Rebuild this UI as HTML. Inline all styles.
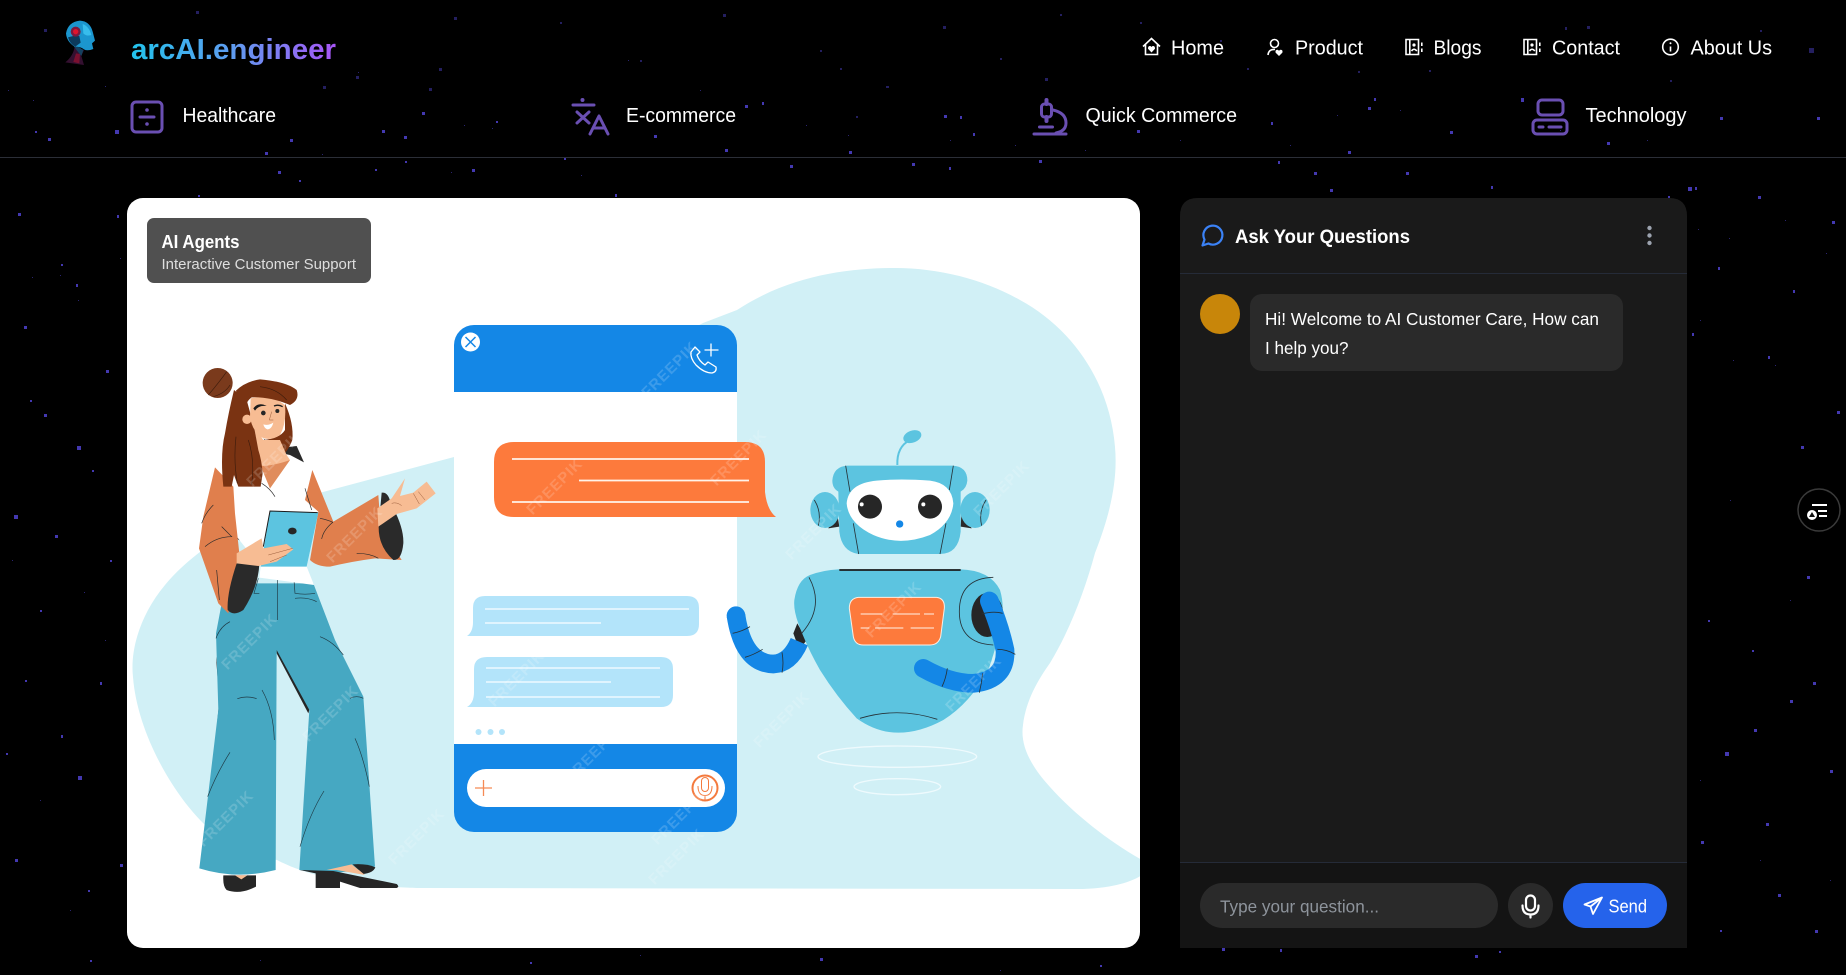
<!DOCTYPE html>
<html lang="en"><head><meta charset="utf-8"><title>arcAI.engineer</title>
<style>
html,body{margin:0;padding:0;background:#000;width:1846px;height:975px;overflow:hidden}
svg{display:block;position:absolute;left:0;top:0}
text{font-family:"Liberation Sans",Arial,sans-serif}
.n{font-size:20px;fill:#fff}
.wm{font-size:15px;font-weight:bold;fill:#fff;opacity:.17;letter-spacing:1px;text-anchor:middle}
</style></head><body>
<svg width="1846" height="975" viewBox="0 0 1846 975" xmlns="http://www.w3.org/2000/svg">
<defs>
<linearGradient id="tg" gradientUnits="userSpaceOnUse" x1="131" y1="0" x2="336" y2="0"><stop offset="0" stop-color="#22c3ec"/><stop offset=".5" stop-color="#5f9bf0"/><stop offset="1" stop-color="#a855f7"/></linearGradient>
<clipPath id="card"><rect x="127" y="198" width="1013" height="750" rx="16"/></clipPath>
</defs>
<rect width="1846" height="975" fill="#000"/>
<!-- stars -->
<path fill="#4338b0" d="M115 130h4v4h-4zM35 131h2v2h-2zM48 138h3v3h-3zM290 139h3v3h-3zM382 130h3v3h-3zM404 136h3v3h-3zM422 112h3v3h-3zM496 121h2v2h-2zM265 152h3v3h-3zM278 171h3v3h-3zM375 169h2v2h-2zM472 169h3v3h-3zM405 161h2v2h-2zM299 180h2v2h-2zM198 195h2v2h-2zM117 215h2v3h-2zM18 213h3v3h-3zM76 284h2v3h-2zM61 264h2v2h-2zM564 158h2v2h-2zM615 194h2v3h-2zM745 105h3v3h-3zM762 102h2v3h-2zM654 135h3v3h-3zM725 149h3v3h-3zM849 151h3v3h-3zM790 165h3v3h-3zM912 163h3v3h-3zM949 167h2v3h-2zM1039 160h3v3h-3zM944 115h3v3h-3zM960 116h2v3h-2zM973 133h2v3h-2zM1137 130h3v3h-3zM1521 98h3v4h-3zM1368 107h3v3h-3zM1374 98h2v3h-2zM1271 122h2v3h-2zM1450 131h3v3h-3zM1348 151h3v3h-3zM1278 161h2v3h-2zM1314 172h3v3h-3zM1406 172h3v3h-3zM1330 189h3v3h-3zM1491 186h2v3h-2zM1688 187h4v4h-4zM1758 196h3v3h-3zM1668 196h2v3h-2zM1720 117h3v3h-3zM1817 117h3v3h-3zM1607 142h3v3h-3zM1832 221h3v3h-3zM1718 267h2v3h-2zM1793 290h2v3h-2zM1692 333h2v3h-2zM1768 356h2v3h-2zM24 326h3v3h-3zM106 370h3v3h-3zM44 414h3v3h-3zM77 446h4v4h-4zM14 515h4v4h-4zM55 535h3v3h-3zM78 776h4v4h-4zM15 859h3v3h-3zM120 864h3v3h-3zM61 735h2v3h-2zM100 682h2v3h-2zM6 753h2v2h-2zM1754 729h3v3h-3zM1766 823h3v3h-3zM1725 752h4v4h-4zM1813 682h3v3h-3zM1695 187h2v3h-2zM1801 446h3v3h-3zM1701 841h3v3h-3zM1778 894h3v3h-3zM1837 411h3v3h-3zM1807 576h3v3h-3zM1222 948h3v3h-3zM1280 949h2v3h-2zM1475 955h3v3h-3zM1499 951h2v2h-2zM1708 620h2v2h-2zM1752 650h2v2h-2zM1790 700h3v3h-3zM1830 770h3v3h-3zM1720 930h2v2h-2zM1815 930h3v3h-3zM90 960h2v2h-2zM530 962h2v2h-2zM820 958h3v3h-3zM1100 965h2v2h-2zM40 610h2v2h-2zM110 560h2v2h-2zM25 680h2v2h-2zM88 890h2v2h-2zM30 400h2v2h-2zM92 470h2v2h-2z"/>
<path fill="#241f60" d="M196 11h3v3h-3zM454 17h3v3h-3zM356 76h3v3h-3zM439 68h3v3h-3zM323 86h3v3h-3zM429 88h3v3h-3zM44 29h3v3h-3zM723 14h3v3h-3zM943 26h3v3h-3zM840 68h2v2h-2zM1045 78h3v3h-3zM886 86h3v2h-3zM856 116h2v2h-2zM1809 48h5v5h-5zM1587 26h3v3h-3zM1358 71h2v2h-2zM1429 70h2v2h-2zM1247 68h2v2h-2zM1565 27h2v3h-2zM1000 58h2v2h-2zM820 50h2v2h-2zM640 60h2v2h-2zM560 22h2v2h-2zM1760 30h2v2h-2zM1670 80h2v2h-2zM1060 14h2v2h-2zM1140 22h2v2h-2zM1220 40h2v2h-2z"/>
<path fill="#2a2470" d="M8 90h1v1H8zM33 100h1v1h-1zM105 86h1v1h-1zM358 72h1v1h-1zM464 125h1v1h-1zM492 128h1v1h-1zM451 172h1v1h-1zM581 175h1v1h-1zM322 154h1v1h-1zM628 60h1v1h-1zM700 90h1v1h-1zM806 125h1v1h-1zM848 135h1v1h-1zM950 140h1v1h-1zM1015 145h1v1h-1zM1100 120h1v1h-1zM1085 150h1v1h-1zM1180 140h1v1h-1zM1290 145h1v1h-1zM1337 115h1v1h-1zM1400 110h1v1h-1zM1560 130h1v1h-1zM1647 140h1v1h-1zM1698 229h1v1h-1zM1729 238h1v1h-1zM1785 220h1v1h-1zM1826 253h1v1h-1zM1775 365h1v1h-1zM1733 360h1v1h-1zM1680 375h1v1h-1zM1700 320h1v1h-1zM60 275h1v1H60zM32 277h1v1H32zM120 258h1v1h-1zM78 300h1v1H78zM12 560h1v1H12zM84 592h1v1H84zM105 640h1v1h-1zM40 800h1v1H40zM70 910h1v1H70zM1730 500h1v1h-1zM1790 600h1v1h-1zM1700 780h1v1h-1zM1760 860h1v1h-1zM1830 880h1v1h-1zM260 960h1v1h-1zM640 955h1v1h-1zM1000 970h1v1h-1z"/>

<!-- logo -->
<g transform="translate(40,0) scale(.3333)">
<path fill="#341030" d="M104 140L132 150 124 168 132 195 76 187Q100 168 104 140Z"/>
<path fill="#7a1030" d="M108 160L120 162 118 190 100 186Z"/>
<path fill="#14405f" d="M92 125L130 150 124 168 108 148Z"/>
<path fill="#1b96cf" d="M120 62Q150 64 158 95L165 122 156 130 160 147Q142 154 132 148 122 140 104 140 80 125 78 100 84 66 120 62Z"/>
<path fill="#0c3a5c" d="M84 112Q90 132 106 140L122 128 118 108 100 108Z"/>
<path fill="#37bdec" d="M128 72Q148 80 154 105 140 110 130 100Z"/>
<circle cx="107" cy="95" r="15" fill="#7d1a3e"/><circle cx="107" cy="95" r="8" fill="#e0142e"/>
</g>
<text x="131" y="59" font-size="28.500" font-weight="bold" fill="url(#tg)" textLength="205" lengthAdjust="spacingAndGlyphs">arcAI.engineer</text>

<!-- top nav -->
<g fill="none" stroke="#fff" stroke-width="1.600">
<path d="M1143 46.500L1151.500 38.500 1160 46.500M1145.500 44.500V54.500H1157.500V44.500"/>
<path fill="#fff" stroke="none" d="M1151.500 52.500L1148 48.800Q1147.800 46 1150 46 1151 46 1151.500 47 1152 46 1153 46 1155.200 46 1155 48.800Z"/>
<circle cx="1274.500" cy="43.500" r="4"/><path d="M1268 55Q1268.500 49 1275 49.500"/>
<path fill="#fff" stroke="none" d="M1279 56L1275.600 52.600Q1275 50 1277.200 49.800 1278.400 49.700 1279 51 1279.600 49.700 1280.800 49.800 1283 50 1282.400 52.600Z"/>
<path d="M1406 39.500H1418.500V54.500H1406ZM1409.800 39.500V54.500M1421.800 42.500V46M1421.800 48.500V52"/>
<circle cx="1414" cy="45" r="1.600" fill="#fff" stroke="none"/><path d="M1411.500 51Q1414 47.500 1416.800 51"/>
<path d="M1524 39.500H1536.500V54.500H1524ZM1527.800 39.500V54.500M1539.800 42.500V46M1539.800 48.500V52"/>
<circle cx="1532" cy="45" r="1.600" fill="#fff" stroke="none"/><path d="M1529.500 51Q1532 47.500 1534.800 51"/>
<circle cx="1670.500" cy="47" r="7.800"/><path d="M1670.500 46.500V51.500"/>
<circle cx="1670.500" cy="43.300" r="1" fill="#fff" stroke="none"/>
</g>
<text class="n" x="1171" y="54.500" textLength="53" lengthAdjust="spacingAndGlyphs">Home</text>
<text class="n" x="1295" y="54.500" textLength="68" lengthAdjust="spacingAndGlyphs">Product</text>
<text class="n" x="1433.500" y="54.500" textLength="48" lengthAdjust="spacingAndGlyphs">Blogs</text>
<text class="n" x="1552" y="54.500" textLength="68" lengthAdjust="spacingAndGlyphs">Contact</text>
<text class="n" x="1690.500" y="54.500" textLength="81.500" lengthAdjust="spacingAndGlyphs">About Us</text>

<!-- category row -->
<g fill="none" stroke="#6a4fb2" stroke-width="3" stroke-linecap="round" stroke-linejoin="round">
<rect x="132" y="102" width="30" height="30" rx="4"/><path d="M140 117H154"/>
<circle cx="147" cy="110" r="1.800" fill="#6a4fb2" stroke="none"/><circle cx="147" cy="124" r="1.800" fill="#6a4fb2" stroke="none"/>
<path d="M573 105H594M577 112L589 123M589 112L577 123M590 134L599 116 608 134M593.500 128H604.500"/>
<circle cx="582.500" cy="100" r="2" fill="#6a4fb2" stroke="none"/>
<path d="M1034 134H1066M1039.500 127H1052.500M1053 110Q1066 113 1066 123 1066 131 1056 133"/>
<rect x="1041.500" y="104" width="10" height="13" rx="3"/><path d="M1046.500 100V104M1046.500 117V121" stroke-width="4"/>
<rect x="1538" y="100" width="25" height="15" rx="4"/><rect x="1533" y="120" width="34" height="14" rx="4"/>
<path d="M1539 127H1543M1549 127H1561"/>
</g>
<text class="n" x="182.500" y="122" textLength="93.500" lengthAdjust="spacingAndGlyphs">Healthcare</text>
<text class="n" x="626" y="122" textLength="110" lengthAdjust="spacingAndGlyphs">E-commerce</text>
<text class="n" x="1085.500" y="122" textLength="151.500" lengthAdjust="spacingAndGlyphs">Quick Commerce</text>
<text class="n" x="1585.500" y="122" textLength="101" lengthAdjust="spacingAndGlyphs">Technology</text>
<rect x="0" y="157" width="1846" height="1" fill="#2b2e37"/>

<!-- image card -->
<g clip-path="url(#card)">
<rect x="127" y="198" width="1013" height="750" fill="#fff"/>
<path fill="#d1f0f6" d="M454 457L323 492C260 510 198 545 165 585 140 615 130 650 133 677 137 730 170 790 203 823 225 845 250 855 277 860 300 872 330 880 363 883 385 887 410 888 423 888L1083 889C1110 888 1130 883 1142 875V860C1110 842 1075 815 1050 787 1030 765 1020 745 1023 725 1026 700 1038 680 1050 663 1070 630 1085 590 1095 553 1110 515 1118 480 1115 447 1110 385 1075 330 1020 300 985 280 940 268 895 268 850 268 790 275 737 310L703 323Z"/>

<!-- phone -->
<rect x="454" y="325" width="283" height="507" rx="20" fill="#1487e6"/>
<rect x="454" y="392" width="283" height="352" fill="#fff"/>
<circle cx="470.500" cy="342" r="9.500" fill="#fff"/>
<path d="M465.500 337L475.500 347M475.500 337L465.500 347" stroke="#1487e6" stroke-width="1.500"/>
<g fill="none" stroke="#fff" stroke-width="1.300" stroke-linecap="round" stroke-linejoin="round">
<path d="M695 347L691 352Q690 358 696 365 704 373 712 373 717 372 716 367L708 362 705 365Q699 361 697 355L700 352Z"/>
<path d="M711 344V356M705 350H718"/>
</g>
<path fill="#fd7a3c" d="M514 442H745Q765 442 765 462V492Q767 510 776 517H514Q494 517 494 497V462Q494 442 514 442Z"/>
<path stroke="#fff3ea" stroke-width="1.800" d="M512 459H749M579 480.500H749M512 502H749"/>
<path fill="#b3e4fa" d="M485 596H687Q699 596 699 608V624Q699 636 687 636H467Q473 632 473 622V608Q473 596 485 596Z"/>
<path fill="#b3e4fa" d="M487 657H661Q673 657 673 669V695Q673 707 661 707H467Q474 703 474 692V669Q474 657 487 657Z"/>
<path stroke="#eefaff" stroke-width="1.400" d="M485 609H689M485 623H601M486 668H660M486 682H611M486 697H660"/>
<circle cx="478.500" cy="732" r="3" fill="#b3e4fa"/><circle cx="490.500" cy="732" r="3" fill="#b3e4fa"/><circle cx="502" cy="732" r="3" fill="#b3e4fa"/>
<rect x="467" y="769" width="258" height="38" rx="19" fill="#fff"/>
<path d="M483.500 780V796M475 788H492" stroke="#f58a55" stroke-width="1.300"/>
<g fill="none" stroke="#f47a3e"><circle cx="705" cy="788" r="12.500" stroke-width="2"/>
<rect x="701.500" y="777.500" width="7" height="14" rx="3.500" stroke-width="1"/><path d="M698 786Q698 795.500 705 795.500 712 795.500 712 786M705 795.500V800" stroke-width="1"/></g>

<!-- robot -->
<g transform="translate(710,410) scale(.33333)">
<path d="M562 165Q560 110 600 90" fill="none" stroke="#5cc4e0" stroke-width="6"/>
<ellipse cx="607" cy="80" rx="28" ry="18" fill="#5cc4e0" transform="rotate(-20 607 80)"/>
<path fill="#2a2a2a" d="M380 300L388 350 355 355ZM755 300L752 350 785 355Z"/>
<ellipse cx="345" cy="300" rx="44" ry="54" fill="#5cc4e0"/><ellipse cx="795" cy="300" rx="44" ry="54" fill="#5cc4e0"/>
<path fill="none" stroke="#263238" stroke-width="2.500" d="M313 270Q335 305 325 347M828 270Q805 305 815 347"/>
<path fill="#5cc4e0" d="M412 167H728Q772 170 772 212 770 235 752 245V365Q745 432 690 432H445Q395 425 388 365L385 245Q367 235 367 212 370 170 412 167Z"/>
<path fill="none" stroke="#263238" stroke-width="2.500" d="M407 167L420 245M730 167L718 240M430 340L446 432M708 340L690 432"/>
<path fill="#fff" d="M500 212Q570 205 660 212 725 220 730 280 725 340 660 375 570 410 490 375 415 340 410 280 415 220 500 212Z"/>
<circle cx="480" cy="290" r="36" fill="#262626"/><circle cx="660" cy="290" r="36" fill="#262626"/>
<circle cx="455" cy="283" r="6" fill="#fff"/><circle cx="640" cy="283" r="6" fill="#fff"/>
<circle cx="569" cy="342" r="11" fill="#1487e6"/>
<path fill="#262626" d="M262 640L290 690 268 720 250 670Z"/>
<path fill="none" stroke="#1487e6" stroke-width="56" d="M78 617Q100 760 190 762 240 760 268 695" />
<circle cx="78" cy="617" r="28" fill="#1487e6"/>
<path fill="none" stroke="#263238" stroke-width="2.500" d="M68 670Q95 665 120 650M105 742Q130 735 158 718M216 727Q222 760 216 788"/>
<path fill="#5cc4e0" d="M385 478H750Q840 480 870 540 885 590 872 640 860 710 835 780 780 880 700 930 630 968 565 968 500 968 440 925 380 860 330 780 290 710 265 640 250 600 253 570 262 510 300 495 340 480 385 478Z"/>
<path stroke="#1b1b1b" stroke-width="5" d="M388 480H752"/>
<path fill="none" stroke="#263238" stroke-width="2.500" d="M297 502Q345 590 275 670M450 925Q565 890 682 928"/>
<path fill="#fd7a3c" stroke="#fbeee4" stroke-width="3" d="M445 562H680Q705 565 703 595L692 680Q685 705 660 705H460Q435 705 430 680L418 595Q418 565 445 562Z"/>
<path stroke="#fff2e8" stroke-width="3" d="M452 612H517M548 612H630M642 612H672M452 654H478M495 654H580M602 654H672"/>
<path fill="none" stroke="#263238" stroke-width="2.500" d="M850 705Q748 700 748 605 748 505 850 502"/>
<ellipse cx="832" cy="615" rx="48" ry="66" fill="#262626"/>
<path fill="none" stroke="#1487e6" stroke-width="56" stroke-linecap="round" d="M838 573Q870 650 885 720 890 810 790 820 720 820 640 775"/>
<path fill="none" stroke="#263238" stroke-width="2.500" d="M815 612Q850 602 878 610M862 718Q890 718 916 733M818 790Q815 820 808 848M712 775Q708 805 696 830"/>
<ellipse cx="562" cy="1040" rx="238" ry="32" fill="none" stroke="#eefafd" stroke-width="4"/>
<ellipse cx="562" cy="1130" rx="130" ry="24" fill="none" stroke="#eefafd" stroke-width="4"/>
</g>

<!-- woman -->
<g transform="translate(130,340) scale(.33333)">
<circle cx="263" cy="129" r="45" fill="#7a3a1c"/>
<path fill="none" stroke="#3e1c0c" stroke-width="2" d="M235 165Q265 130 290 95M250 170Q285 160 300 135"/>
<path fill="#2a2a2a" d="M400 295L440 325 500 318 522 367 480 345 430 335Z"/>
<!-- pants -->
<path fill="#262626" d="M258 950Q275 1040 262 1140L270 1110ZM438 880L545 1085 535 1120 440 940Z"/>
<path fill="#46a8c2" d="M275 790L380 730H550L615 900 700 1070 735 1580Q620 1610 508 1590L538 1110 440 930 437 1590Q320 1620 208 1585L265 1110 258 880Z"/>
<g fill="none" stroke="#1f3a45" stroke-width="2">
<path d="M385 715L372 760H388M492 720L495 760Q525 765 555 760M442 715V840M495 775Q530 770 560 785M300 845Q270 860 258 895M570 890Q610 905 640 945M322 1076Q350 1066 380 1076M396 1050Q430 1110 433 1200M675 1195Q700 1250 718 1340M300 1237Q260 1300 233 1370M582 1353Q540 1420 510 1520M660 1075Q680 1065 700 1075"/>
</g>
<!-- shoes -->
<path fill="#262626" d="M280 1606H378V1640Q330 1665 290 1650 278 1640 280 1606Z"/>
<path fill="#f7bc93" d="M315 1606H352L334 1618Z"/>
<path fill="#262626" d="M668 1573Q710 1570 736 1582 730 1598 700 1602Z"/>
<path fill="#f7bc93" d="M590 1590L665 1573 705 1605 620 1590Z"/>
<path fill="#262626" d="M510 1590L610 1593 800 1632Q810 1640 800 1644H690L630 1625V1644H557V1600Z"/>
<!-- top -->
<path fill="#2a2a2a" d="M312 530L345 590 385 600 370 625 310 590Z"/>
<path fill="#fff" d="M305 440L420 445 480 360 548 390 530 440 525 480 565 515 530 680 552 735 388 713 392 680 320 590Z"/>
<!-- right sleeve -->
<path fill="#e07f4d" d="M547 390L610 545 745 465 752 560 815 660 735 655Q660 665 600 680 560 680 540 660L565 515 525 480Z"/>
<path fill="#2a2a2a" d="M755 458Q775 455 782 490 822 560 820 610 815 662 790 660 745 620 746 560Z"/>
<path fill="#f7bc93" d="M742 505L785 475 825 415 810 468 850 458 890 425 917 460 860 505 800 522 745 560Z"/>
<path fill="none" stroke="#9a5b3a" stroke-width="1.500" d="M850 460L868 492M865 455L885 480M785 490Q800 485 815 497"/>
<path fill="none" stroke="#2a2a2a" stroke-width="2" d="M570 535Q595 540 608 547 580 570 575 597M680 640Q720 640 745 655M525 445L545 510"/>
<!-- tablet -->
<path fill="#5cc4e0" d="M420 513L565 518 530 680H392Z"/>
<path fill="none" stroke="#1b1b1b" stroke-width="3" d="M400 620L420 513 563 518"/>
<ellipse cx="487" cy="573" rx="13" ry="10" fill="#262626"/>
<!-- left sleeve -->
<path fill="#e07f4d" d="M255 382L310 440 315 520 328 640 388 670 320 670 295 820 265 790 207 625 220 530Z"/>
<path fill="#2a2a2a" d="M320 670L388 672Q385 740 340 810 310 830 293 810 290 760 320 670Z"/>
<path fill="#f7bc93" d="M320 640L395 595 400 625 470 612 490 628 440 665 385 678 320 670Z"/>
<path fill="none" stroke="#9a5b3a" stroke-width="1.500" d="M415 645L488 625M420 665L470 645"/>
<path fill="none" stroke="#2a2a2a" stroke-width="2" d="M250 495Q225 520 215 550M275 560L305 590Q260 590 225 620M260 690L268 780"/>
<!-- head -->
<path fill="#7a3312" d="M465 190Q492 250 487 300 470 345 440 358L400 300Q450 295 465 270Z"/>
<path fill="#f7bc93" d="M372 260L400 300H450L470 345 480 360 420 445 392 378Z"/>
<path fill="#e08c5c" d="M392 378Q430 378 480 360L420 445Z"/>
<path fill="#7a3312" d="M312 150Q295 220 285 280 270 340 280 440H305L312 405 325 440 362 440H392L398 400Q395 360 385 330L372 260 350 180Z"/>
<circle cx="351" cy="238" r="14" fill="#f7bc93"/>
<path fill="#f7bc93" d="M362 175Q420 160 465 195 470 250 450 285 420 305 395 292 365 270 360 230Z"/>
<path fill="#7a3312" d="M318 152Q345 125 390 118 470 125 500 150 510 180 480 195 420 170 365 172 345 185 340 225 325 190 318 152Z"/>
<path fill="none" stroke="#3e1c0c" stroke-width="2" d="M390 140Q440 145 470 180M318 290Q310 360 322 430M355 300Q375 360 365 435"/>
<path fill="#1d1d1d" d="M370 205Q385 185 410 198 385 195 375 212Z"/>
<path stroke="#1d1d1d" stroke-width="4" fill="none" d="M432 198Q445 192 458 200"/>
<circle cx="400" cy="219" r="7" fill="#262626"/><circle cx="442" cy="213" r="6" fill="#262626"/>
<path fill="#fff" d="M400 253Q415 258 430 248 425 268 412 268 403 265 400 253Z"/>
<path fill="none" stroke="#9a5b3a" stroke-width="1.500" d="M425 215L418 240 430 240"/>
<path fill="none" stroke="#2a2a2a" stroke-width="2" d="M395 430Q420 445 435 470"/>
</g>

<g class="wmg">
<text class="wm" transform="translate(253,645) rotate(-45)">FREEPIK</text>
<text class="wm" transform="translate(334,717) rotate(-45)">FREEPIK</text>
<text class="wm" transform="translate(229,822) rotate(-45)">FREEPIK</text>
<text class="wm" transform="translate(278,462) rotate(-45)">FREEPIK</text>
<text class="wm" transform="translate(358,538) rotate(-45)">FREEPIK</text>
<text class="wm" transform="translate(558,490) rotate(-45)">FREEPIK</text>
<text class="wm" transform="translate(673,373) rotate(-45)">FREEPIK</text>
<text class="wm" transform="translate(742,461) rotate(-45)">FREEPIK</text>
<text class="wm" transform="translate(520,682) rotate(-45)">FREEPIK</text>
<text class="wm" transform="translate(597,757) rotate(-45)">FREEPIK</text>
<text class="wm" transform="translate(683,820) rotate(-45)">FREEPIK</text>
<text class="wm" transform="translate(897,613) rotate(-45)">FREEPIK</text>
<text class="wm" transform="translate(977,687) rotate(-45)">FREEPIK</text>
<text class="wm" transform="translate(817,535) rotate(-45)">FREEPIK</text>
<text class="wm" transform="translate(785,723) rotate(-45)">FREEPIK</text>
<text class="wm" transform="translate(1005,492) rotate(-45)">FREEPIK</text>
<text class="wm" transform="translate(420,840) rotate(-45)">FREEPIK</text>
<text class="wm" transform="translate(680,860) rotate(-45)">FREEPIK</text>
</g>

<!-- badge -->
<rect x="147" y="218" width="224" height="65" rx="7" fill="#505050"/>
<text x="161.500" y="248" font-size="18" font-weight="bold" fill="#fff" textLength="78" lengthAdjust="spacingAndGlyphs">AI Agents</text>
<text x="161.500" y="269" font-size="15" fill="#dedede" textLength="194.500" lengthAdjust="spacingAndGlyphs">Interactive Customer Support</text>
</g>

<!-- chat panel -->
<path fill="#1a1a1a" d="M1180 948V216Q1180 198 1198 198H1669Q1687 198 1687 216V948Z"/>
<rect x="1180" y="273" width="507" height="1" fill="#252b38"/>
<rect x="1180" y="862" width="507" height="86" fill="#141414"/>
<rect x="1180" y="862" width="507" height="1" fill="#252b38"/>
<path transform="translate(1200.500,223.500)" fill="none" stroke="#3b82f6" stroke-width="2.200" stroke-linejoin="round" d="M7.900 20A9.500 9.500 0 1 0 4 16.100L2 22Z"/>
<text x="1235" y="243" font-size="19" font-weight="bold" fill="#fff" textLength="175" lengthAdjust="spacingAndGlyphs">Ask Your Questions</text>
<circle cx="1649.500" cy="228" r="2.200" fill="#9ca3af"/><circle cx="1649.500" cy="235.500" r="2.200" fill="#9ca3af"/><circle cx="1649.500" cy="243" r="2.200" fill="#9ca3af"/>
<circle cx="1220" cy="314" r="20" fill="#c8860a"/>
<rect x="1250" y="294" width="373" height="77" rx="12" fill="#2a2a2a"/>
<text x="1265" y="325" font-size="17.500" fill="#fff" textLength="334" lengthAdjust="spacingAndGlyphs">Hi! Welcome to AI Customer Care, How can</text>
<text x="1265" y="354" font-size="17.500" fill="#fff" textLength="83.500" lengthAdjust="spacingAndGlyphs">I help you?</text>

<rect x="1200" y="883" width="298" height="45" rx="22.500" fill="#2a2a2a"/>
<text x="1220" y="912.500" font-size="17.500" fill="#8e949c" textLength="159" lengthAdjust="spacingAndGlyphs">Type your question...</text>
<circle cx="1530.500" cy="905.500" r="22.500" fill="#2a2a2a"/>
<g fill="none" stroke="#fff" stroke-width="2.200" stroke-linecap="round">
<rect x="1526" y="895.500" width="9" height="15" rx="4.500"/>
<path d="M1522.500 905.500Q1522.500 914.500 1530.500 914.500 1538.500 914.500 1538.500 905.500M1530.500 914.500V917.500"/>
</g>
<rect x="1563" y="883" width="104" height="45" rx="22.500" fill="#2563eb"/>
<path fill="none" stroke="#fff" stroke-width="1.800" stroke-linejoin="round" d="M1584.500 904.500L1602 897.500 1593 914 1590.500 906.500ZM1590.500 906.500L1602 897.500"/>
<text x="1608.500" y="912.500" font-size="18" fill="#fff" textLength="38.500" lengthAdjust="spacingAndGlyphs">Send</text>

<!-- floating button -->
<circle cx="1819" cy="510" r="21" fill="#000" stroke="#3a3a3a" stroke-width="1.500"/>
<path stroke="#fff" stroke-width="2" d="M1812 505H1827M1818 511H1827M1819 516H1827"/>
<circle cx="1812" cy="515" r="5" fill="#fff"/><path fill="#111" d="M1812 512L1815 517H1809Z"/>
</svg>
</body></html>
